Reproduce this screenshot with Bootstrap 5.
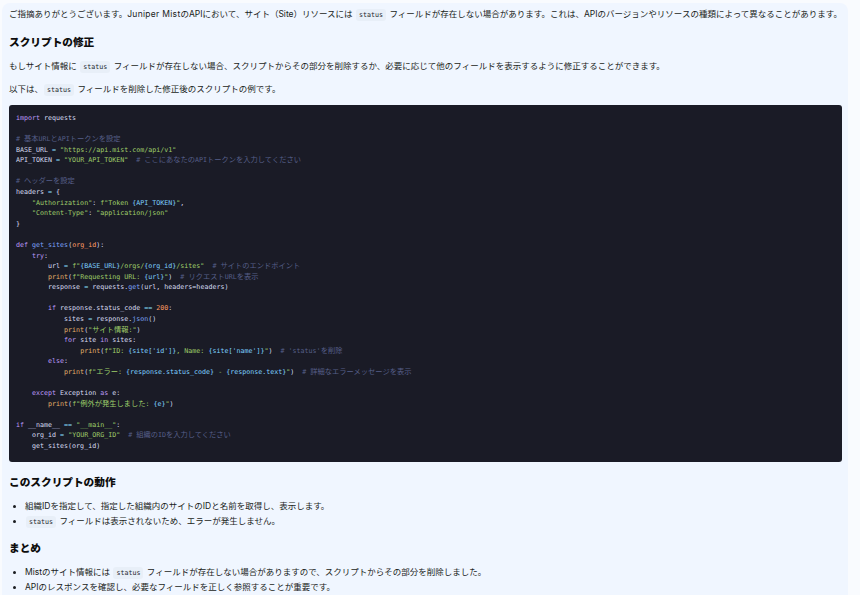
<!DOCTYPE html>
<html lang="ja">
<head>
<meta charset="utf-8">
<link rel="stylesheet" href="https://cdn.jsdelivr.net/npm/bootstrap@5.3.0/dist/css/bootstrap.min.css">
<style>
html,body{height:595px;overflow:hidden;background:#f9fbfe;}
body{font-family:Inter,"Noto Sans CJK JP",sans-serif;font-size:8.5px;line-height:15px;color:#1a1d21;}
.msg-panel{background:#f0f6ff;margin:3px 12px 0 2px;padding:4px 6px 0 7px;border-radius:8px 8px 0 0;height:592px;overflow:hidden;}
.msg-panel p{margin:0 0 8px;white-space:nowrap;}
.msg-panel h3{font-size:10.67px;font-weight:900;line-height:16px;margin:13px 0 8px;color:#0d0d0d;font-family:Inter,"Noto Sans CJK JP",sans-serif;}
.msg-panel ul{margin:0 0 8px;padding-left:16px;}
.msg-panel ul + h3{margin-top:12px;}
.latin{letter-spacing:.3px;}
.inl{font-family:"DejaVu Sans Mono",monospace;font-size:6.67px;line-height:1;color:#24292f;background:#e8eff8;border-radius:3px;padding:2px 3px;margin:0 1px;}
.code-box{background:#1a1b26;border-radius:3px;margin:0 0 12px;padding:8px 7px 4px;font-family:"DejaVu Sans Mono","Noto Sans CJK JP",monospace;font-size:6.67px;line-height:10.58px;color:#d5daf0;white-space:pre;overflow:hidden;height:357px;}
.j{font-family:"Noto Sans CJK JP",sans-serif;font-size:7.25px;line-height:1;}
.k{color:#bb9af7}.s{color:#9ece6a}.c{color:#565f89}.f{color:#7aa2f7}.b{color:#e0af68}.n{color:#ff9e64}.i{color:#7dcfff}.o{color:#89ddff}
</style>
</head>
<body>
<div class="msg-panel">
<p>ご指摘ありがとうございます。<span class="latin">Juniper Mist</span>のAPIにおいて、サイト（Site）リソースには <code class="inl">status</code> フィールドが存在しない場合があります。これは、APIのバージョンやリソースの種類によって異なることがあります。</p>
<h3>スクリプトの修正</h3>
<p>もしサイト情報に <code class="inl">status</code> フィールドが存在しない場合、スクリプトからその部分を削除するか、必要に応じて他のフィールドを表示するように修正することができます。</p>
<p>以下は、<code class="inl">status</code> フィールドを削除した修正後のスクリプトの例です。</p>
<pre class="code-box"><span class="k">import</span> requests

<span class="c"># <span class="j">基本</span>URL<span class="j">と</span>API<span class="j">トークンを設定</span></span>
BASE_URL <span class="o">=</span> <span class="s">"https://api.mist.com/api/v1"</span>
API_TOKEN <span class="o">=</span> <span class="s">"YOUR_API_TOKEN"</span>  <span class="c"># <span class="j">ここにあなたの</span>API<span class="j">トークンを入力してください</span></span>

<span class="c"># <span class="j">ヘッダーを設定</span></span>
headers <span class="o">=</span> {
    <span class="s">"Authorization"</span>: <span class="s">f"Token </span><span class="i">{API_TOKEN}</span><span class="s">"</span>,
    <span class="s">"Content-Type"</span>: <span class="s">"application/json"</span>
}

<span class="k">def</span> <span class="f">get_sites</span>(<span class="n">org_id</span>):
    <span class="k">try</span>:
        url <span class="o">=</span> <span class="s">f"</span><span class="i">{BASE_URL}</span><span class="s">/orgs/</span><span class="i">{org_id}</span><span class="s">/sites"</span>  <span class="c"># <span class="j">サイトのエンドポイント</span></span>
        <span class="b">print</span>(<span class="s">f"Requesting URL: </span><span class="i">{url}</span><span class="s">"</span>)  <span class="c"># <span class="j">リクエスト</span>URL<span class="j">を表示</span></span>
        response <span class="o">=</span> requests.<span class="f">get</span>(url, headers=headers)

        <span class="k">if</span> response.status_code <span class="o">==</span> <span class="n">200</span>:
            sites <span class="o">=</span> response.<span class="f">json</span>()
            <span class="b">print</span>(<span class="s">"<span class="j">サイト情報</span>:"</span>)
            <span class="k">for</span> site <span class="k">in</span> sites:
                <span class="b">print</span>(<span class="s">f"ID: </span><span class="i">{site['id']}</span><span class="s">, Name: </span><span class="i">{site['name']}</span><span class="s">"</span>)  <span class="c"># 'status'<span class="j">を削除</span></span>
        <span class="k">else</span>:
            <span class="b">print</span>(<span class="s">f"<span class="j">エラー</span>: </span><span class="i">{response.status_code}</span><span class="s"> - </span><span class="i">{response.text}</span><span class="s">"</span>)  <span class="c"># <span class="j">詳細なエラーメッセージを表示</span></span>

    <span class="k">except</span> Exception <span class="k">as</span> e:
        <span class="b">print</span>(<span class="s">f"<span class="j">例外が発生しました</span>: </span><span class="i">{e}</span><span class="s">"</span>)

<span class="k">if</span> __name__ <span class="o">==</span> <span class="s">"__main__"</span>:
    org_id <span class="o">=</span> <span class="s">"YOUR_ORG_ID"</span>  <span class="c"># <span class="j">組織の</span>ID<span class="j">を入力してください</span></span>
    get_sites(org_id)</pre>
<h3>このスクリプトの動作</h3>
<ul>
<li>組織IDを指定して、指定した組織内のサイトのIDと名前を取得し、表示します。</li>
<li><code class="inl">status</code> フィールドは表示されないため、エラーが発生しません。</li>
</ul>
<h3>まとめ</h3>
<ul>
<li>Mistのサイト情報には <code class="inl">status</code> フィールドが存在しない場合がありますので、スクリプトからその部分を削除しました。</li>
<li>APIのレスポンスを確認し、必要なフィールドを正しく参照することが重要です。</li>
</ul>
</div>
<script src="https://cdn.jsdelivr.net/npm/bootstrap@5.3.0/dist/js/bootstrap.bundle.min.js"></script>
</body>
</html>
